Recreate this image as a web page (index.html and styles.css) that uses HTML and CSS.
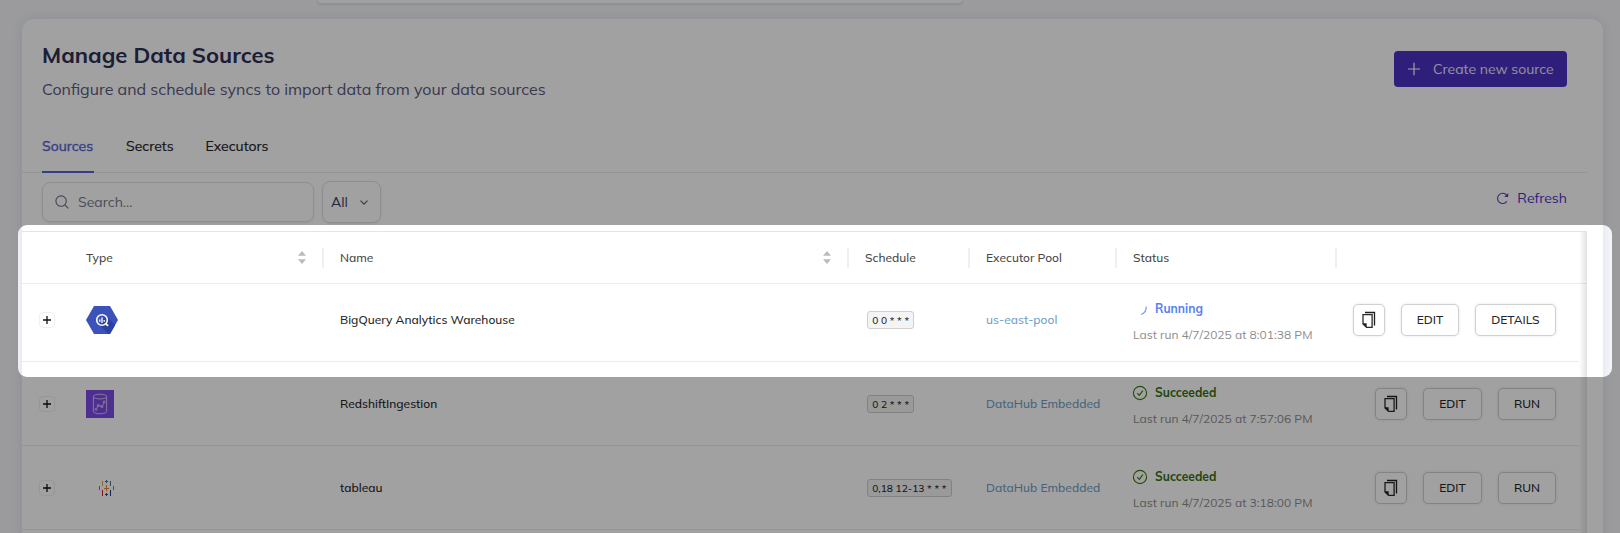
FILE: index.html
```html
<!DOCTYPE html>
<html lang="en">
<head>
<meta charset="utf-8">
<title>Manage Data Sources</title>
<link rel="stylesheet" href="styles.css">
</head>
<body>
<svg class="defs" width="0" height="0">
  <symbol id="copy" viewBox="0 0 16 18">
    <path d="M4 1.5H13.5V14.5" fill="none" stroke="#1f1f1f" stroke-width="1.3"/>
    <path d="M2.5 3.6H11.1V16.4H5.6L2 13V3.6Z" fill="none" stroke="#2b2b2b" stroke-width="1.3"/>
    <path d="M1.6 12.2H5.6V16.4Z" fill="#1f1f1f"/>
  </symbol>
  <symbol id="check" viewBox="0 0 16 16">
    <circle cx="8" cy="8" r="6.6" fill="none" stroke="#3a7d0e" stroke-width="1.1"/>
    <path d="M5.2 8.2 7.3 10.3 10.8 5.7" fill="none" stroke="#3a7d0e" stroke-width="1.2"/>
  </symbol>
  <symbol id="sort" viewBox="0 0 8 13">
    <path d="M4 0 8 4.8H0ZM4 13 0 8.2H8Z" fill="#bbb"/>
  </symbol>
  <symbol id="plus" viewBox="0 0 10 10">
    <path d="M5 1V9M1 5H9" stroke="#111" stroke-width="1.3"/>
  </symbol>
</svg>
<div class="page">
  <div class="top-search"></div>
  <main class="card">
    <header class="head">
      <div>
        <h1 class="title">Manage Data Sources</h1>
        <p class="subtitle">Configure and schedule syncs to import data from your data sources</p>
      </div>
      <button class="create">
        <svg width="14" height="14" viewBox="0 0 14 14"><path d="M7 .8V13.2M1 7H13" stroke="#fff" stroke-width="1.2"/></svg>
        <span class="create-text">Create new source</span>
      </button>
    </header>
    <nav class="tabs">
      <span class="tab tab-active t-sources">Sources</span>
      <span class="tab t-secrets">Secrets</span>
      <span class="tab t-exec">Executors</span>
    </nav>
    <div class="toolbar">
      <div class="search">
        <svg width="14" height="14" viewBox="0 0 14 14"><circle cx="6.1" cy="6.1" r="5.2" fill="none" stroke="#6b6f88" stroke-width="1.1"/><path d="M9.9 9.9 13.3 13.3" stroke="#6b6f88" stroke-width="1.2"/></svg>
        <span>Search...</span>
      </div>
      <div class="select"><span>All</span>
        <svg width="8" height="5" viewBox="0 0 8 5"><path d="M.5 .6 4 4.1 7.5 .6" fill="none" stroke="#5b5f7a" stroke-width="1.2"/></svg>
      </div>
      <div class="refresh">
        <svg width="13" height="13" viewBox="0 0 13 13"><path d="M10.9 9.2A5.1 5.1 0 1 1 10.6 3.2" fill="none" stroke="#5540c0" stroke-width="1.1"/><path d="M12.2 1.1V5H8.3Z" fill="#5540c0"/></svg>
        <span>Refresh</span>
      </div>
    </div>
    <section class="table">
      <div class="row thead">
        <div></div>
        <div class="cell sep"><span>Type</span><svg width="8" height="13"><use href="#sort"/></svg></div>
        <div class="cell sep"><span>Name</span><svg width="8" height="13"><use href="#sort"/></svg></div>
        <div class="cell sep"><span>Schedule</span></div>
        <div class="cell sep"><span>Executor Pool</span></div>
        <div class="cell sep"><span>Status</span></div>
        <div></div>
      </div>
      <div class="row first">
        <div class="expand"><i class="exp"><svg width="10" height="10"><use href="#plus"/></svg></i></div>
        <div class="cell">
          <svg width="32" height="28" viewBox="0 0 32 28"><path d="M8 0H24L32 14 24 28H8L0 14Z" fill="#3a52ba"/><path d="M20 10 29.3 18.8 24 28H22.5L13 18.6Z" fill="#2d41a3"/><circle cx="16" cy="14" r="5.3" fill="none" stroke="#fff" stroke-width="1.6"/><path d="M19.6 17.4 22 19.8" stroke="#fff" stroke-width="1.9"/><path d="M13.8 13.5V15.8M16 11.6V17M18.2 14V15.8" stroke="#fff" stroke-width="1.3"/></svg>
        </div>
        <div class="cell"><span class="name">BigQuery Analytics Warehouse</span></div>
        <div class="cell"><code class="cron">0 0 * * *</code></div>
        <div class="cell"><a class="pool">us-east-pool</a></div>
        <div class="cell status">
          <div class="state running"><svg width="16" height="16" viewBox="0 0 16 16"><path d="M14.2 5.6C14.4 9 12.5 12.2 9 13.5" fill="none" stroke="#6f93fb" stroke-width="1.2"/></svg><span>Running</span></div>
          <div class="last">Last run 4/7/2025 at 8:01:38 PM</div>
        </div>
        <div class="actions"><button class="btn copy"><svg width="16" height="18"><use href="#copy"/></svg></button><button class="btn edit">EDIT</button><button class="btn details">DETAILS</button></div>
      </div>
      <div class="row">
        <div class="expand"><i class="exp"><svg width="10" height="10"><use href="#plus"/></svg></i></div>
        <div class="cell">
          <svg width="28" height="28" viewBox="0 0 28 28"><rect width="28" height="28" fill="#7c4ae6"/><g fill="none" stroke="#d9ccf8" stroke-width=".9"><path d="M7.4 6.3C7.4 3.6 20.6 3.6 20.6 6.3V21.5C20.6 24.5 7.4 24.5 7.4 21.5Z"/><path d="M7.4 7C9 9.6 19 9.6 20.6 7"/><path d="M10 19 12.3 15.8 16 16.5 18.3 12.2"/><circle cx="10" cy="19.4" r="1"/><circle cx="12.3" cy="15.4" r="1"/><circle cx="16" cy="16.5" r="1"/><circle cx="18.3" cy="11.8" r="1"/></g></svg>
        </div>
        <div class="cell"><span class="name">RedshiftIngestion</span></div>
        <div class="cell"><code class="cron">0 2 * * *</code></div>
        <div class="cell"><a class="pool">DataHub Embedded</a></div>
        <div class="cell status">
          <div class="state ok"><svg width="16" height="16"><use href="#check"/></svg><span>Succeeded</span></div>
          <div class="last">Last run 4/7/2025 at 7:57:06 PM</div>
        </div>
        <div class="actions"><button class="btn copy"><svg width="16" height="18"><use href="#copy"/></svg></button><button class="btn edit wide">EDIT</button><button class="btn run">RUN</button></div>
      </div>
      <div class="row">
        <div class="expand"><i class="exp"><svg width="10" height="10"><use href="#plus"/></svg></i></div>
        <div class="cell">
          <svg class="tableau" width="16" height="16" viewBox="0 0 16 16" fill="none" stroke-width="1"><path d="M7.5 5V11M5 8.5H10" stroke="#e8862d"/><path d="M3.5 1V6" stroke="#eba13c"/><path d="M11.5 1V6" stroke="#4b778b"/><path d="M3.5 10V16" stroke="#c72035"/><path d="M11.5 10V16" stroke="#1f357e"/><path d="M.5 6V10M14.5 6V10" stroke="#6089a6"/><path d="M7.5 0V3M6 1.5H9" stroke="#4b778b"/><path d="M7.5 13V16M6 14.5H9" stroke="#3c4a86"/></svg>
        </div>
        <div class="cell"><span class="name">tableau</span></div>
        <div class="cell"><code class="cron">0,18 12-13 * * *</code></div>
        <div class="cell"><a class="pool">DataHub Embedded</a></div>
        <div class="cell status">
          <div class="state ok"><svg width="16" height="16"><use href="#check"/></svg><span>Succeeded</span></div>
          <div class="last">Last run 4/7/2025 at 3:18:00 PM</div>
        </div>
        <div class="actions"><button class="btn copy"><svg width="16" height="18"><use href="#copy"/></svg></button><button class="btn edit wide">EDIT</button><button class="btn run">RUN</button></div>
      </div>
      <div class="edge"></div>
    </section>
  </main>
  <div class="spotlight"></div>
</div>
</body>
</html>
```

FILE: styles.css
```css
* { box-sizing: border-box; }
body { margin: 0; font-family: Mulish, Lato, "Open Sans", sans-serif; color: #262626; }
.defs { position: absolute; }
.page { position: relative; width: 1620px; height: 533px; overflow: hidden; background: #f5f6f9; display: flex; flex-direction: column; }
.top-search { width: 646px; height: 4px; margin-left: 317px; flex: none; background: #fff; border: 1px solid #e4e5ec; border-top: 0; border-radius: 0 0 8px 8px; box-shadow: 0 1px 2px rgba(60, 60, 120, .12); }
.card { width: 1581px; height: 600px; flex: none; margin: 15px 0 0 22px; background: #fff; border-radius: 12px; box-shadow: 0 0 12px rgba(70, 75, 125, .12); }
.head { height: 106px; padding: 20px 36px 0 20px; display: flex; justify-content: space-between; }
.title { margin: 0; font-size: 22px; line-height: 32px; font-weight: 700; color: #2e2e55; }
.subtitle { margin: 6px 0 0; font-size: 16px; line-height: 24px; color: #5a5a7c; }
.create { margin-top: 12px; width: 173px; height: 36px; padding: 0 0 0 13px; border: 0; border-radius: 4px; background: #4b32c3; color: #e9e7f7; font: inherit; font-size: 14px; display: flex; align-items: center; gap: 12px; }
.tabs { height: 48px; width: 1565px; padding-left: 20px; display: flex; border-bottom: 1px solid #ececec; }
.tab { height: 48px; padding-top: 11px; font-size: 14px; line-height: 20px; margin-right: 32px; color: #222; -webkit-text-stroke: .15px currentColor; white-space: nowrap; }
.tab-active { color: #5262d6; border-bottom: 2px solid #5262d6; -webkit-text-stroke: .35px currentColor; }
.t-sources { width: 52px; }
.t-secrets { width: 47.5px; }
.toolbar { height: 58px; padding: 8px 36px 0 20px; display: flex; align-items: flex-start; font-size: 14px; }
.search { width: 272px; height: 40px; margin-top: 1px; padding-left: 12px; display: flex; align-items: center; gap: 9px; border: 1px solid #e1e1e4; border-radius: 8px; box-shadow: 0 1px 2px rgba(0, 0, 0, .08); color: #77798c; }
.select { width: 59px; height: 42px; margin-left: 8px; padding: 0 12px 0 8px; display: flex; align-items: center; justify-content: space-between; border: 1px solid #dfdfe2; border-radius: 8px; box-shadow: 0 1px 2px rgba(0, 0, 0, .08); color: #3c3f5c; }
.refresh { margin-left: auto; height: 34px; display: flex; align-items: center; gap: 8px; color: #4b32c3; }
.table { position: relative; width: 1565px; height: 360px; border-top: 1px solid #e4e4e4; font-size: 12px; font-weight: 500; }
.row { display: grid; grid-template-columns: 48px 254px 525px 121px 147px 220px 242px; width: 1557px; height: 84px; align-items: center; border-bottom: 1px solid #ececec; }
.first { height: 78px; padding-bottom: 6px; }
.thead { width: 1565px; height: 52px; color: #484848; }
.cell { padding-left: 16px; white-space: nowrap; }
.sep { height: 20px; display: flex; align-items: center; justify-content: space-between; padding-right: 16px; border-right: 2px solid #efefef; }
.expand { padding-left: 16.5px; }
.exp { width: 16px; height: 16px; border: 1px solid #efefef; border-radius: 4px; display: flex; align-items: center; justify-content: center; }
.cell > svg { display: block; }
.tableau { margin-left: 13px; }
.cron { display: inline-block; margin-left: 2px; padding: 0 4.2px; height: 18px; font: inherit; font-size: 10.2px; line-height: 17px; background: #f4f4f4; border: 1px solid #cfcfcf; border-radius: 3px; vertical-align: middle; }
.pool { color: #729fc6; }
.status { display: flex; flex-direction: column; padding-top: 5px; }
.state { height: 16px; display: flex; align-items: center; gap: 7px; font-weight: 700; font-size: 12px; margin-left: -1px; }
.state span { margin-top: -2px; transform: scaleY(1.09); }
.running { color: #5580f5; }
.ok { color: #356f12; }
.last { margin-top: 10px; line-height: 16px; color: #8c8c8c; font-weight: 400; letter-spacing: .02px; }
.actions { display: flex; justify-content: flex-end; gap: 16px; padding-right: 23px; }
.btn { height: 32px; padding: 0; display: flex; align-items: center; justify-content: center; background: #fff; border: 1px solid #d0d0d0; border-radius: 5px; box-shadow: 0 0 3px rgba(0, 0, 0, .11); font: inherit; color: #262626; }
.copy { width: 32px; }
.edit { width: 58px; }
.edit.wide { width: 59px; }
.run { width: 58px; }
.details { width: 81px; }
.edge { position: absolute; top: 0; right: 0; width: 8px; height: 100%; background: linear-gradient(to right, rgba(0, 0, 0, 0), rgba(0, 0, 0, .11)); }
.spotlight { position: absolute; left: 18px; top: 225px; width: 1594px; height: 152px; border-radius: 9px; box-shadow: 0 0 0 1700px rgba(0, 0, 0, .37); }
```
